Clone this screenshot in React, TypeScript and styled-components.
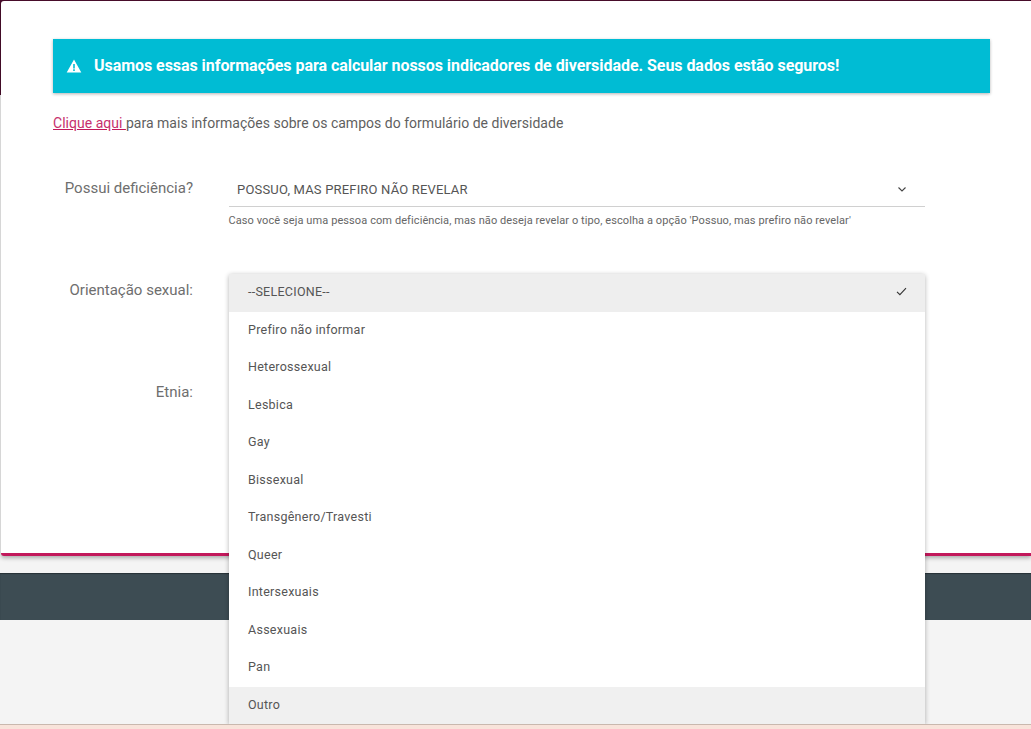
import React from "react";
import styled, { createGlobalStyle } from "styled-components";

const Global = createGlobalStyle`
  html, body { margin: 0; padding: 0; }
  body { font-family: Roboto, "Liberation Sans", sans-serif; background: #f4f4f4; }
  * { box-sizing: border-box; }
`;

const Page = styled.div`
  position: relative;
  width: 1031px;
  height: 729px;
  overflow: hidden;
  background: linear-gradient(#4a0d2c 95px, #f4f4f4 95px);
  display: flex;
  flex-direction: column;
`;

const Card = styled.main`
  margin: 1px 0 0 1px;
  height: 555px;
  flex: none;
  background: #fff;
  border-bottom: 3px solid #c2185b;
  border-radius: 3px 0 0 3px;
  box-shadow: 0 2px 4px rgba(0, 0, 0, 0.3);
  padding: 38px 41px 0 52px;
`;

const Alert = styled.div`
  height: 54px;
  background: #00bcd4;
  color: #fff;
  display: flex;
  align-items: center;
  gap: 12px;
  padding: 0 0 1px 13px;
  font-size: 16px;
  font-weight: 700;
  letter-spacing: -0.05px;
  box-shadow: 0 1px 3px rgba(0, 0, 0, 0.3);
`;

const Intro = styled.p`
  margin: 21px 0 0;
  font-size: 14px;
  line-height: 18px;
  letter-spacing: 0.02px;
  color: #5f5f5f;
`;

const IntroLink = styled.a`
  color: #c6306e;
  text-decoration: underline;
  text-decoration-color: #c2185b;
`;

const Form = styled.form`
  margin-top: 47px;
  display: flex;
  flex-direction: column;
`;

const Row = styled.div<{ $height: number }>`
  display: grid;
  grid-template-columns: 140px 696px;
  column-gap: 36px;
  height: ${(p) => p.$height}px;
`;

const Label = styled.label`
  text-align: right;
  font-size: 15px;
  line-height: 18px;
  color: #6e6e6e;
`;

const SelectBox = styled.div`
  height: 35px;
  margin-top: -7px;
  border-bottom: 1px solid #d0d0d0;
  display: flex;
  align-items: center;
  justify-content: space-between;
  padding: 0 19px 0 8px;
  font-size: 13px;
  letter-spacing: 0.18px;
  color: #555;
`;

const Hint = styled.div`
  margin-top: 7px;
  margin-left: -0.5px;
  font-size: 11px;
  line-height: 14px;
  color: #666;
  letter-spacing: 0.09px;
`;

const Bar = styled.div`
  margin-top: 17px;
  height: 47px;
  flex: none;
  background: #3d4c53;
  box-shadow: inset 0 1px 1px rgba(0, 0, 0, 0.35);
`;

const Spacer = styled.div`
  flex: 1;
`;

const BottomStrip = styled.div`
  position: relative;
  z-index: 1;
  height: 5px;
  flex: none;
  background: #f8e3da;
  border-top: 1px solid #c9b8ae;
`;

const Menu = styled.ul`
  position: absolute;
  left: 229px;
  top: 274px;
  width: 696px;
  height: 450px;
  margin: 0;
  padding: 0;
  list-style: none;
  background: #fff;
  border-radius: 2px 2px 0 0;
  box-shadow: 0 1px 5px rgba(0, 0, 0, 0.3);
`;

const Item = styled.li<{ $bg?: string }>`
  height: 37.5px;
  display: flex;
  align-items: center;
  justify-content: space-between;
  padding: 0 18px 2px 19px;
  font-size: 12.5px;
  letter-spacing: 0.26px;
  color: #555;
  background: ${(p) => p.$bg ?? "transparent"};
`;

const options = [
  "Prefiro não informar",
  "Heterossexual",
  "Lesbica",
  "Gay",
  "Bissexual",
  "Transgênero/Travesti",
  "Queer",
  "Intersexuais",
  "Assexuais",
  "Pan",
];

export default function App() {
  return (
    <Page>
      <Global />
      <Card>
        <Alert>
          <svg width="16" height="14" viewBox="0 0 16 14" aria-hidden="true">
            <path fillRule="evenodd" fill="#fff" d="M8 0.5 15.3 13.5H.7ZM7.2 5v4.4h1.6V5ZM7.2 10.3v1.6h1.6v-1.6Z" />
          </svg>
          Usamos essas informações para calcular nossos indicadores de diversidade. Seus dados estão seguros!
        </Alert>
        <Intro>
          <IntroLink href="#">Clique aqui </IntroLink>
          para mais informações sobre os campos do formulário de diversidade
        </Intro>
        <Form>
          <Row $height={102}>
            <Label>Possui deficiência?</Label>
            <div>
              <SelectBox>
                POSSUO, MAS PREFIRO NÃO REVELAR
                <svg width="8" height="5" viewBox="0 0 8 5" aria-hidden="true">
                  <path d="M.5.5 4 4 7.5.5" fill="none" stroke="#444" strokeWidth="1.1" />
                </svg>
              </SelectBox>
              <Hint>Caso você seja uma pessoa com deficiência, mas não deseja revelar o tipo, escolha a opção 'Possuo, mas prefiro não revelar'</Hint>
            </div>
          </Row>
          <Row $height={102}>
            <Label>Orientação sexual:</Label>
            <div />
          </Row>
          <Row $height={40}>
            <Label>Etnia:</Label>
            <div />
          </Row>
        </Form>
      </Card>
      <Bar />
      <Spacer />
      <BottomStrip />
      <Menu>
        <Item $bg="#eeeeee">
          --SELECIONE--
          <svg width="11" height="9" viewBox="0 0 11 9" aria-hidden="true">
            <path d="M1 4.8 3.9 7.7 10 1.2" fill="none" stroke="#333" strokeWidth="1.1" />
          </svg>
        </Item>
        {options.map((o) => (
          <Item key={o}>{o}</Item>
        ))}
        <Item $bg="#f0f0f0">Outro</Item>
      </Menu>
    </Page>
  );
}
